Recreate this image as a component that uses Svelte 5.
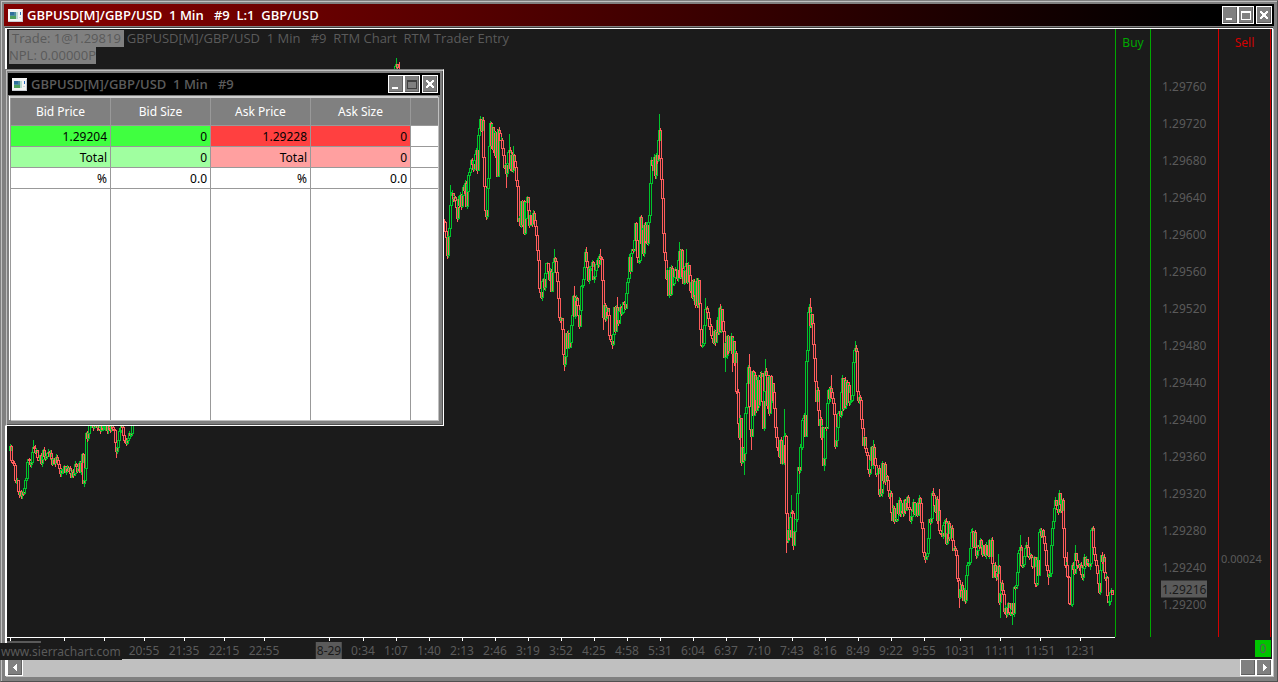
<script lang="ts">
	interface Bar {
		x: number;
		open: number;
		close: number;
		high: number;
		low: number;
	}

	interface Time {
		label: string;
		x: number;
		day?: boolean;
	}

	const PLOT_WIDTH = 1108;
	const PLOT_HEIGHT = 608;
	const LEFT = 7;
	const TOP = 29;

	// minute:level pairs, gaps between two pairs are interpolated
	const closes = `
		10:446 11:460 12:462 14:465 15:480 17:480 18:491 20:492 21:495 23:493 24:488 25:480 26:478 27:462 28:459
		31:462 33:447 35:452 37:457 39:460 42:459 43:450 45:458 47:453 50:453 52:464 54:458 57:460 59:468 61:470
		63:469 66:468 68:470 71:477 73:475 75:464 77:471 79:463 80:472 82:454 83:483 85:468 86:433 88:433 89:425
		96:422 97:427 104:427 112:427 114:430 115:442 116:451 118:440 120:430 121:425 124:440 126:443 128:438
		129:433 131:433 132:422 140:380 200:300 300:200 380:100 394:75 395:66 396:64 397:67 398:70 400:74 420:150 440:220
		444:222 445:231 446:237 447:255 448:236 449:228 450:205 451:195 452:193 453:198 455:200 456:207 457:218
		458:199 459:205 460:195 461:206 463:187 464:190 465:183 466:206 468:175 469:172 470:168 471:160 472:164
		473:169 474:160 476:150 477:170 478:135 479:128 480:119 481:130 482:120 483:157 484:186 485:210 486:216
		487:188 488:178 489:146 490:123 491:145 492:127 493:149 494:133 495:155 496:132 497:176 498:130 499:133
		500:140 502:148 503:155 504:167 505:165 506:173 507:163 508:152 509:150 510:168 511:155 512:170 513:155
		515:167 516:180 517:186 518:221 520:225 521:201 522:224 523:201 524:233 526:202 527:197 529:225 530:215
		532:224 533:213 535:226 536:235 537:250 538:260 539:288 541:297 542:281 543:279 544:287 545:273 547:263
		548:271 549:279 550:271 551:291 552:272 553:262 554:258 556:272 557:281 558:298 559:317 560:320 561:318
		562:329 563:354 564:364 565:356 566:333 567:348 568:333 569:347 570:342 571:325 572:315 573:296 574:316
		575:300 577:305 578:315 579:326 580:310 581:286 582:285 584:267 585:252 587:267 588:280 589:268 591:266
		592:262 593:279 595:270 597:260 598:264 599:256 600:258 601:259 602:280 603:317 604:305 605:318 607:308
		608:315 609:335 611:341 612:344 613:334 614:307 615:331 616:307 617:320 618:323 620:307 622:312 623:302
		625:308 626:293 627:282 628:278 629:257 630:271 631:253 633:250 634:240 635:223 636:240 637:257 638:262
		639:260 640:217 641:243 642:230 643:253 644:225 645:240 646:225 647:243 648:222 649:215 650:183 651:160
		652:165 653:170 654:157 655:175 656:155 657:160 658:140 659:130 660:158 661:179 662:198 663:233 664:252
		665:260 666:278 667:270 668:295 669:270 670:294 671:268 672:285 674:277 676:270 677:278 678:260 679:251
		680:277 681:250 682:268 683:283 684:270 686:263 687:282 688:265 689:275 690:290 691:282 692:297 693:281
		694:295 695:304 696:281 697:305 698:280 699:303 700:329 701:345 703:343 704:325 705:309 706:308 707:312
		709:326 711:335 713:342 714:331 715:342 716:331 717:320 718:332 719:308 720:330 721:309 722:321 723:331
		724:357 725:343 726:355 727:336 728:350 729:336 730:350 731:336 732:353 733:341 734:362 735:353 736:391
		737:392 738:423 739:437 740:418 741:462 742:447 743:460 744:453 745:413 746:407 748:367 749:406 750:429
		751:436 752:371 753:415 754:375 755:400 756:410 757:380 758:405 759:375 761:373 762:401 763:428 764:391
		765:371 766:375 767:405 768:377 769:413 770:376 771:401 772:383 773:392 774:408 775:427 777:447 779:456
		780:440 781:463 782:445 783:463 784:436 785:436 786:513 787:540 788:530 789:537 790:517 791:512 792:513
		793:545 794:531 795:519 796:519 797:493 798:467 799:470 800:447 801:447 802:420 803:418 804:415 805:436
		806:361 807:350 808:312 809:307 810:325 811:314 812:323 813:344 814:358 815:381 816:401 817:390 818:410
		819:425 820:419 821:437 822:427 823:465 824:458 825:427 826:428 827:403 828:390 829:398 830:388 831:392
		832:398 834:414 835:446 836:440 837:427 838:413 840:415 841:392 842:378 843:408 844:380 845:405 846:382
		847:392 848:385 849:402 851:400 852:395 853:362 854:350 855:348 856:351 857:391 858:400 859:397 860:400
		861:419 862:428 863:445 864:437 865:448 867:455 869:473 870:460 871:447 872:465 873:447 875:465 877:473
		878:468 879:494 881:493 882:463 883:480 884:464 885:481 887:480 888:490 890:493 891:512 892:520 893:508
		894:521 896:520 897:503 898:513 899:500 900:513 902:503 903:513 904:500 905:510 907:497 908:507 910:520
		912:511 913:502 914:513 916:503 917:515 918:502 920:503 921:522 922:528 923:552 924:556 926:556 927:553
		928:538 929:519 931:518 932:493 934:505 935:511 936:499 937:520 938:510 939:530 941:533 942:536 943:525
		945:521 946:543 948:523 949:538 951:528 952:540 953:550 954:548 956:555 957:578 958:580 959:597 961:585
		963:600 964:590 965:600 966:575 967:565 969:562 970:548 971:532 972:531 973:546 974:532 975:547 976:555
		978:545 980:540 982:554 983:545 985:555 986:545 988:555 989:540 990:556 991:540 992:563 993:577 994:565
		996:577 998:566 999:602 1001:583 1003:594 1004:611 1006:614 1008:603 1010:614 1012:603 1013:613 1014:587
		1016:585 1017:572 1018:553 1020:547 1021:565 1023:564 1024:556 1026:545 1028:556 1030:555 1032:566
		1034:557 1035:583 1036:584 1037:560 1038:575 1039:532 1040:531 1042:530 1044:543 1045:550 1047:570
		1049:574 1050:573 1051:545 1052:528 1054:508 1055:500 1057:509 1058:512 1059:493 1061:510 1062:500
		1063:528 1064:557 1066:565 1068:577 1069:603 1071:604 1072:565 1074:573 1075:553 1076:560 1078:565
		1080:565 1082:577 1084:557 1085:565 1087:563 1089:566 1090:563 1091:530 1092:528 1093:547 1095:560
		1096:565 1098:583 1099:592 1101:555 1103:557 1104:572 1106:577 1107:595 1109:601 1110:592 1111:590 1112:594`
		.trim()
		.split(/\s+/)
		.map((pair) => pair.split(':').map(Number));

	// long wicks
	const spikes: Record<number, number> = {
		10: 444, 33: 440, 83: 483, 116: 457, 396: 58, 399: 62, 447: 257, 450: 185, 465: 185, 506: 187,
		509: 134, 513: 146, 554: 249, 564: 370, 574: 286, 586: 247, 600: 249, 603: 329, 612: 348,
		617: 297, 659: 114, 679: 242, 686: 249, 705: 298, 720: 304, 725: 371, 732: 371, 744: 474,
		749: 354, 751: 449, 765: 359, 784: 409, 786: 552, 791: 495, 793: 549, 810: 298, 824: 470,
		831: 375, 855: 341, 873: 440, 926: 559, 933: 488, 939: 489, 959: 607, 998: 554, 1000: 617,
		1012: 624, 1020: 535, 1028: 537, 1048: 584, 1059: 491, 1067: 552, 1075: 545, 1099: 593, 1109: 605
	};

	function noise(n: number): number {
		const value = Math.sin(n * 127.1) * 43758.5453;
		return value - Math.floor(value);
	}

	function buildBars(): Bar[] {
		const bars: Bar[] = [];
		let previous = closes[0][1] + 4;
		for (let i = 0; i < closes.length; i++) {
			const [x, y] = closes[i];
			const [nextX, nextY] = closes[i + 1] ?? [x + 1, y];
			for (let at = x; at < nextX; at++) {
				const ratio = (at - x) / (nextX - x);
				const wobble = at === x ? 0 : (noise(at) - 0.5) * 10;
				const close = Math.round(y + (nextY - y) * ratio + wobble);
				const top = Math.min(previous, close);
				const bottom = Math.max(previous, close);
				const spike = spikes[at] ?? close;
				bars.push({
					x: at,
					open: previous,
					close,
					high: Math.min(top - Math.floor(noise(at + 3000) * 4), spike),
					low: Math.max(bottom + Math.floor(noise(at + 7000) * 4), spike)
				});
				previous = close;
			}
		}
		return bars;
	}

	function barPath(bar: Bar): string {
		const x = bar.x - LEFT + 0.5;
		const top = Math.min(bar.open, bar.close) - TOP + 0.5;
		const bottom = Math.max(bar.open, bar.close) - TOP + 0.5;
		const high = bar.high - TOP;
		const low = bar.low - TOP + 1;
		return `M${x - 1} ${top}h2V${bottom}h-2zM${x} ${high}V${top}M${x} ${bottom}V${low}`;
	}

	const bars = buildBars();

	const prices = Array.from({ length: 15 }, (_, i) => ({
		label: (1.2976 - i * 0.0004).toFixed(5),
		y: 57 + i * 37
	}));

	const nightTimes = ['0:34', '1:07', '1:40', '2:13', '2:46', '3:19', '3:52', '4:25', '4:58'];
	const dayTimes = ['5:31', '6:04', '6:37', '7:10', '7:43', '8:16', '8:49', '9:22', '9:55'];

	const times: Time[] = [
		{ label: '', x: 10 },
		{ label: '', x: 64 },
		{ label: '', x: 104 },
		{ label: '20:55', x: 144 },
		{ label: '21:35', x: 184 },
		{ label: '22:15', x: 224 },
		{ label: '22:55', x: 264 },
		{ label: '8-29', x: 329, day: true },
		...[...nightTimes, ...dayTimes].map((label, i) => ({ label, x: 363 + i * 33 })),
		{ label: '10:31', x: 960 },
		{ label: '11:11', x: 1000 },
		{ label: '11:51', x: 1040 },
		{ label: '12:31', x: 1080 }
	];

	const columns = ['Bid Price', 'Bid Size', 'Ask Price', 'Ask Size'];
	const rows = [
		{ kind: 'quote', cells: ['1.29204', '0', '1.29228', '0'] },
		{ kind: 'total', cells: ['Total', '0', 'Total', '0'] },
		{ kind: 'percent', cells: ['%', '0.0', '%', '0.0'] }
	];

	const across = (x: number) => `${((x - LEFT) / PLOT_WIDTH) * 100}%`;
	const down = (y: number) => `${(y / PLOT_HEIGHT) * 100}%`;
</script>

{#snippet appIcon()}
	<svg class="app-icon" width="15" height="13" viewBox="0 0 15 13" shape-rendering="crispEdges" aria-hidden="true">
		<path fill="#f4f4f4" d="M0 0h15v13H0z" />
		<path fill="#c8ccd2" d="M0 12h15v1H0zM14 1h1v12h-1z" />
		<path fill="#4f8fa0" d="M2 3h8v7H2z" />
		<path fill="#2f6f9c" d="M2 3h4v3H2z" />
		<path fill="#4fa05c" d="M2 7h6v3H2z" />
		<path fill="#b8d8d0" d="M8 3h2v7H8z" />
		<path fill="#2a6cc0" d="M12 3h1v3h-1z" />
		<path fill="#d8d8d8" d="M11 8h2v1h-2z" />
	</svg>
{/snippet}

{#snippet windowButtons(dimmed: boolean)}
	<div class="window-buttons">
		<button type="button" aria-label="Minimize">
			<svg width="12" height="14" viewBox="0 0 12 14" shape-rendering="crispEdges"><path fill="#fff" d="M2 10h6v2H2z" /></svg>
		</button>
		<button type="button" aria-label="Maximize" class:dimmed>
			<svg width="12" height="14" viewBox="0 0 12 14" shape-rendering="crispEdges">
				<path fill="currentColor" fill-rule="evenodd" d="M1 3h10v9H1zM2 5v6h8V5z" />
			</svg>
		</button>
		<button type="button" aria-label="Close" class="close">
			<svg width="12" height="14" viewBox="0 0 12 14" shape-rendering="crispEdges">
				<path fill="#fff" d="M2 3h2v1h1v1h2V4h1V3h2v2H9v1H8v2h1v1h1v2H8v-1H7V9H5v1H4v1H2V9h1V8h1V6H3V5H2z" />
			</svg>
		</button>
	</div>
{/snippet}

<main class="window">
	<header class="title-bar">
		{@render appIcon()}
		<h1>GBPUSD[M]/GBP/USD  1 Min   #9  L:1  GBP/USD</h1>
		{@render windowButtons(false)}
	</header>

	<div class="client">
		<div class="chart">
			<div class="plot">
				<svg class="bars" viewBox="0 0 {PLOT_WIDTH} {PLOT_HEIGHT}" preserveAspectRatio="none" shape-rendering="crispEdges" aria-label="GBP/USD 1 Min">
					{#each bars as bar (bar.x)}
						<path class={bar.close <= bar.open ? 'up' : 'down'} d={barPath(bar)} />
					{/each}
				</svg>
				<div class="legend">
					<div class="legend-row">
						<span class="trade">Trade: 1@1.29819</span>
						<span>GBPUSD[M]/GBP/USD  1 Min   #9  RTM Chart  RTM Trader Entry</span>
					</div>
					<span class="npl">NPL: 0.00000P</span>
				</div>
			</div>
			<div class="lane buy">Buy</div>
			<div class="lane scale">
				{#each prices as price (price.label)}
					<span class="price" style:top={down(price.y)}>{price.label}</span>
				{/each}
				<span class="price last" style:top={down(560)}>1.29216</span>
			</div>
			<div class="lane sell">
				Sell
				<span class="spread" style:top={down(529)}>0.00024</span>
			</div>
		</div>

		<div class="time-axis">
			<div class="times">
				{#each times as time (time.x)}
					<span class="tick" style:left={across(time.x)}></span>
					{#if time.label}
						<span class="time" class:day={time.day} style:left={across(time.x)}>{time.label}</span>
					{/if}
				{/each}
				<span class="first-day"></span>
			</div>
			<span class="position">0</span>
			<a class="site" href="http://www.sierrachart.com">www.sierrachart.com</a>
		</div>

		<div class="scrollbar">
			<button type="button" aria-label="Scroll left">
				<svg width="13" height="13" viewBox="0 0 13 13" shape-rendering="crispEdges"><path fill="#fff" d="M7 3h1v7H7V9H6V8H5V7H4V6h1V5h1V4h1z" /></svg>
			</button>
			<div class="track">
				<button type="button" class="thumb" aria-label="Scroll position"></button>
			</div>
			<button type="button" aria-label="Scroll right">
				<svg width="13" height="13" viewBox="0 0 13 13" shape-rendering="crispEdges"><path fill="#fff" d="M5 3h1v1h1v1h1v1h1v1H8v1H7v1H6v1H5z" /></svg>
			</button>
		</div>
	</div>

	<section class="depth">
		<div class="depth-frame">
			<header class="title-bar inactive">
				{@render appIcon()}
				<h2>GBPUSD[M]/GBP/USD  1 Min   #9</h2>
				{@render windowButtons(true)}
			</header>
			<table>
				<thead>
					<tr>
						{#each columns as column}
							<th scope="col">{column}</th>
						{/each}
						<th class="rest"></th>
					</tr>
				</thead>
				<tbody>
					{#each rows as row}
						<tr class={row.kind}>
							{#each row.cells as cell, i}
								<td class={i < 2 ? 'bid' : 'ask'}>{cell}</td>
							{/each}
							<td class="rest"></td>
						</tr>
					{/each}
					<tr class="filler">
						<td></td>
						<td></td>
						<td></td>
						<td></td>
						<td class="rest"></td>
					</tr>
				</tbody>
			</table>
		</div>
	</section>
</main>

<style>
	:global(body) {
		margin: 0;
		background: #808080;
	}

	.window {
		position: relative;
		box-sizing: border-box;
		display: flex;
		flex-direction: column;
		min-height: 100vh;
		padding: 2px;
		background: #808080;
		border: 1px solid #808080;
		border-right-color: #505050;
		border-bottom-color: #505050;
		box-shadow: inset 1px 1px #c0c0c0;
		font-family: 'Noto Sans', 'Open Sans', sans-serif;
		font-size: 12px;
		line-height: 17px;
		color: #5a5a5a;
	}

	.title-bar {
		display: flex;
		align-items: center;
		gap: 4px;
		height: 22px;
		margin: 1px 1px 0;
		padding: 0 2px 0 4px;
		background: linear-gradient(90deg, #800000, #800000 8%, #000 94%);
		color: #fff;
	}

	.title-bar.inactive {
		margin: 0;
		background: #000;
		color: #5a5a5a;
	}

	h1,
	h2 {
		flex: 1;
		margin: 0;
		font-family: 'Open Sans', 'Noto Sans', sans-serif;
		font-size: 13px;
		font-weight: 600;
		white-space: pre;
	}

	.window-buttons {
		display: flex;
	}

	button {
		box-sizing: border-box;
		display: flex;
		align-items: center;
		justify-content: center;
		width: 16px;
		height: 18px;
		padding: 0;
		background: #808080;
		border: 1px solid #fff;
		box-shadow: inset -1px -1px #606060;
		color: #fff;
	}

	button.close {
		margin-left: 2px;
	}

	button.dimmed {
		color: #404040;
	}

	.client {
		flex: 1;
		display: flex;
		flex-direction: column;
		margin: 2px 2px 3px;
		border: solid #fff;
		border-width: 1px 1px 0 2px;
		background: #1b1b1b;
		box-shadow: 0 -1px #404040, 1px 1px #c0c0c0;
	}

	.chart {
		flex: 1;
		display: grid;
		grid-template-columns: 1fr 36px 67px 53px;
		padding-right: 1px;
	}

	.plot {
		position: relative;
		border-bottom: 1px solid #fff;
	}

	.bars {
		position: absolute;
		inset: 0;
		width: 100%;
		height: 100%;
	}

	.bars path {
		fill: none;
		stroke-width: 1;
	}

	.up {
		stroke: #00c42c;
	}

	.down {
		stroke: #ff5c5c;
	}

	.legend {
		position: relative;
		display: flex;
		flex-direction: column;
		align-items: flex-start;
		padding: 1px 0 0 2px;
		font-family: 'Open Sans', 'Noto Sans', sans-serif;
		font-size: 13px;
		white-space: pre;
	}

	.legend-row {
		display: flex;
		gap: 3px;
	}

	.trade,
	.npl {
		background: #808080;
	}

	.trade {
		padding: 0 3px;
	}

	.lane {
		position: relative;
		box-sizing: border-box;
		margin-bottom: 1px;
		padding-top: 5px;
		text-align: center;
	}

	.buy {
		border: solid #00a800;
		border-width: 0 1px;
		color: #00a800;
	}

	.sell {
		border: solid #d40000;
		border-width: 0 1px;
		color: #d40000;
	}

	.price,
	.spread {
		position: absolute;
		left: 10px;
		padding: 0 1px;
		transform: translateY(-50%);
	}

	.spread {
		left: 1px;
		color: #5a5a5a;
		font-size: 11px;
	}

	.last {
		background: #5a5a5a;
		color: #1b1b1b;
	}

	.time-axis {
		position: relative;
		display: grid;
		grid-template-columns: 1fr 157px;
		height: 21px;
	}

	.times {
		position: relative;
	}

	.tick {
		position: absolute;
		top: 0;
		width: 1px;
		height: 3px;
		background: #fff;
	}

	.time {
		position: absolute;
		top: 4px;
		transform: translateX(-50%);
	}

	.time.day {
		background: #5a5a5a;
		color: #1b1b1b;
		padding: 0 1px;
	}

	.first-day {
		position: absolute;
		top: 3px;
		left: 0;
		width: 34px;
		height: 4px;
		background: #5a5a5a;
	}

	.position {
		justify-self: end;
		align-self: center;
		width: 16px;
		margin-right: 1px;
		background: #00c400;
		text-align: center;
	}

	.site {
		position: absolute;
		left: -7px;
		top: 5px;
		padding: 0 1px;
		background: #1b1b1b;
		color: #5a5a5a;
		text-decoration: none;
	}

	.scrollbar {
		display: flex;
		height: 17px;
		background: #c0c0c0;
	}

	.scrollbar button {
		width: 16px;
		height: 17px;
	}

	.track {
		flex: 1;
		display: flex;
		justify-content: flex-end;
	}

	.depth {
		position: absolute;
		top: 68px;
		left: 4px;
		width: 439px;
		box-sizing: border-box;
		padding: 1px;
		background: #808080;
		border: 1px solid #fff;
		border-top-color: #808080;
		border-left-color: #808080;
		box-shadow: inset 1px 1px #c0c0c0, inset -1px -1px #505050;
	}

	.depth-frame {
		padding: 2px 2px 4px 1px;
	}

	table {
		width: 428px;
		margin: 1px 0 0 2px;
		border-top: 2px solid #d0d0d0;
		border-collapse: separate;
		border-spacing: 0;
		table-layout: fixed;
		background: #fff;
		box-shadow: 1px 1px #c0c0c0, -1px 0 #fff;
		color: #000;
	}

	th,
	td {
		box-sizing: border-box;
		width: 100px;
		height: 21px;
		padding: 0 3px;
		border-right: 1px solid #999;
		border-bottom: 1px solid #999;
		text-align: right;
		font-weight: 400;
	}

	th:first-child,
	td:first-child {
		width: 101px;
		border-left: 1px solid #999;
	}

	th {
		height: 28px;
		background: #808080;
		color: #fff;
		text-align: center;
	}

	.rest {
		width: 27px;
		border-right: 0;
	}

	.quote .bid {
		background: #40ff40;
	}

	.quote .ask {
		background: #ff4040;
	}

	.total .bid {
		background: #a0ffa0;
	}

	.total .ask {
		background: #ffa0a0;
	}

	.filler td {
		height: 231px;
		border-bottom: 0;
	}
</style>
